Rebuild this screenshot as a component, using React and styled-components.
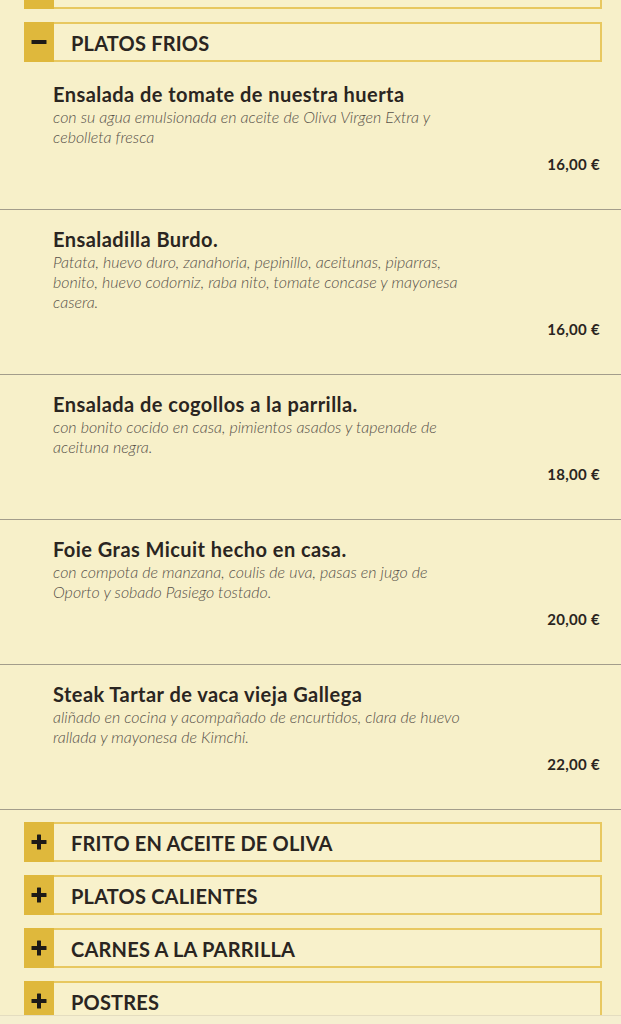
import React, { useState } from "react";
import styled, { createGlobalStyle } from "styled-components";

const GlobalStyle = createGlobalStyle`
  html, body {
    margin: 0;
    padding: 0;
    background: #f7f0c9;
  }
  body {
    font-family: Lato, "Noto Sans", sans-serif;
    color: #2a2521;
  }
`;

const Page = styled.div`
  margin-top: -31px;
  padding-bottom: 40px;
`;

const Section = styled.section`
  display: flex;
  flex-direction: column;
`;

const Header = styled.button`
  display: flex;
  align-items: stretch;
  height: 40px;
  margin: 0 19px 13px 24px;
  padding: 0;
  box-sizing: border-box;
  border: 2px solid #e8c860;
  border-left: none;
  background: #f8f1cb;
  cursor: pointer;
  font-family: inherit;
  text-align: left;
`;

const Toggle = styled.span`
  display: flex;
  align-items: center;
  justify-content: center;
  width: 30px;
  margin: -2px 0;
  background: #dfb83c;
  flex-shrink: 0;
`;

const HeaderTitle = styled.span`
  display: flex;
  align-items: center;
  padding: 2px 0 0 17px;
  font-size: 20px;
  font-weight: 700;
  text-transform: uppercase;
  letter-spacing: 0.2px;
  color: #2a2521;
`;

const Items = styled.div`
  display: flex;
  flex-direction: column;
  margin-top: -10px;
  margin-bottom: 12px;
`;

const Item = styled.article`
  display: flex;
  flex-direction: column;
  padding: 18px 21px 35px 53px;
  border-bottom: 1px solid #a39d8b;
`;

const ItemTitle = styled.h3`
  margin: 0 0 2px;
  font-size: 20px;
  line-height: 22px;
  font-weight: 700;
  letter-spacing: 0.45px;
  color: #2a2521;
`;

const ItemDesc = styled.p`
  margin: 0;
  width: 415px;
  font-size: 16px;
  line-height: 20px;
  font-weight: 300;
  font-style: italic;
  color: #57524a;
`;

const Price = styled.div`
  margin-top: 7px;
  align-self: flex-end;
  font-size: 15px;
  line-height: 20px;
  font-weight: 700;
  letter-spacing: 0.3px;
  color: #2a2521;
`;

const Footer = styled.div`
  position: fixed;
  left: 0;
  right: 0;
  bottom: 0;
  height: 8px;
  background: #f5efd0;
  border-top: 1px solid #e4ddc0;
`;

const Sign = ({ open }) => (
  <svg width="16" height="16" viewBox="0 0 16 16">
    <rect x="0.5" y="6" width="15" height="4" rx="0.6" fill="#1d1a17" />
    {!open && <rect x="6" y="0.5" width="4" height="15" rx="0.6" fill="#1d1a17" />}
  </svg>
);

const sections = [
  { id: "compartir", title: "Para compartir", items: [] },
  {
    id: "frios",
    title: "Platos frios",
    items: [
      {
        name: "Ensalada de tomate de nuestra huerta",
        desc: "con su agua emulsionada en aceite de Oliva Virgen Extra y cebolleta fresca",
        price: "16,00 €",
      },
      {
        name: "Ensaladilla Burdo.",
        desc: "Patata, huevo duro, zanahoria, pepinillo, aceitunas, piparras, bonito, huevo codorniz, raba nito, tomate concase y mayonesa casera.",
        price: "16,00 €",
      },
      {
        name: "Ensalada de cogollos a la parrilla.",
        desc: "con bonito cocido en casa, pimientos asados y tapenade de aceituna negra.",
        price: "18,00 €",
      },
      {
        name: "Foie Gras Micuit hecho en casa.",
        desc: "con compota de manzana, coulis de uva, pasas en jugo de Oporto y sobado Pasiego tostado.",
        price: "20,00 €",
      },
      {
        name: "Steak Tartar de vaca vieja Gallega",
        desc: "aliñado en cocina y acompañado de encurtidos, clara de huevo rallada y mayonesa de Kimchi.",
        price: "22,00 €",
      },
    ],
  },
  { id: "frito", title: "Frito en aceite de oliva", items: [] },
  { id: "calientes", title: "Platos calientes", items: [] },
  { id: "carnes", title: "Carnes a la parrilla", items: [] },
  { id: "postres", title: "Postres", items: [] },
];

const App = () => {
  const [open, setOpen] = useState("frios");
  return (
    <>
      <GlobalStyle />
      <Page>
        {sections.map((section) => {
          const isOpen = open === section.id;
          return (
            <Section key={section.id}>
              <Header onClick={() => setOpen(isOpen ? null : section.id)}>
                <Toggle>
                  <Sign open={isOpen} />
                </Toggle>
                <HeaderTitle>{section.title}</HeaderTitle>
              </Header>
              {isOpen && section.items.length > 0 && (
                <Items>
                  {section.items.map((item) => (
                    <Item key={item.name}>
                      <ItemTitle>{item.name}</ItemTitle>
                      <ItemDesc>{item.desc}</ItemDesc>
                      <Price>{item.price}</Price>
                    </Item>
                  ))}
                </Items>
              )}
            </Section>
          );
        })}
      </Page>
      <Footer />
    </>
  );
};

export default App;
